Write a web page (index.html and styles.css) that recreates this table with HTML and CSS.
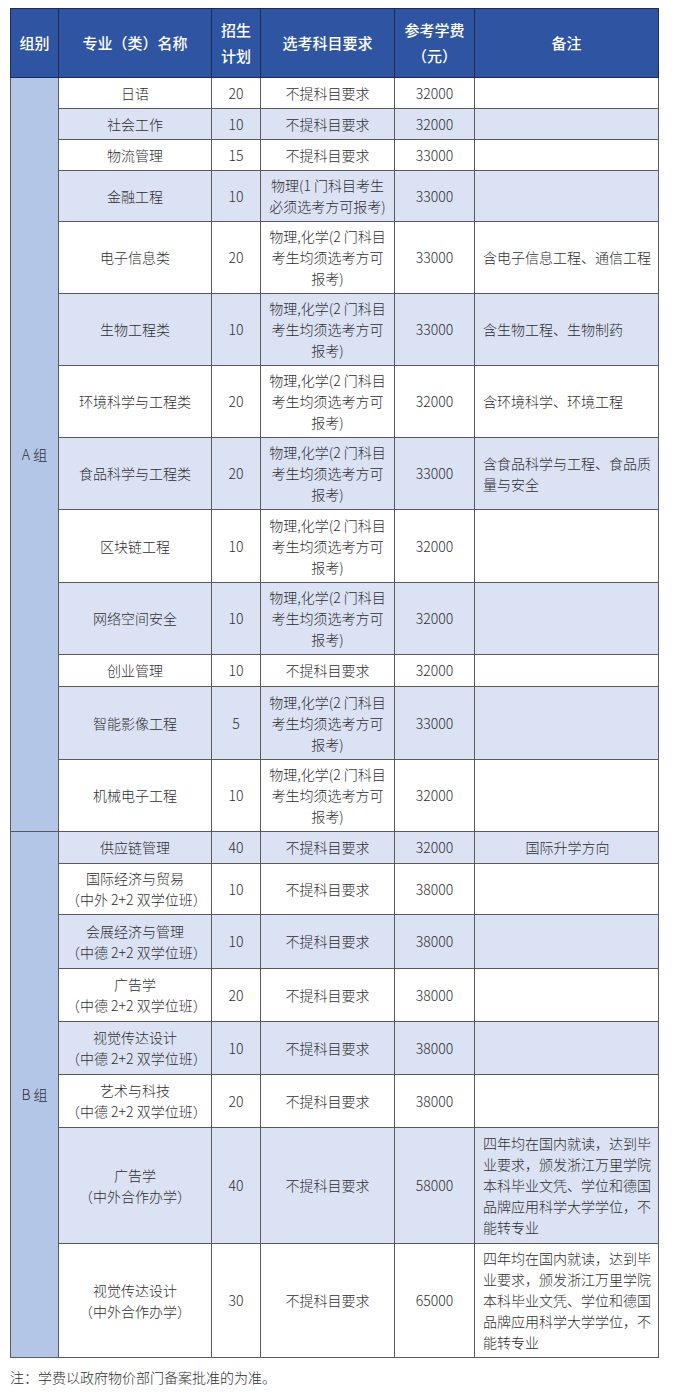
FILE: index.html
```html
<!DOCTYPE html>
<html lang="zh">
<head>
<meta charset="utf-8">
<title>招生计划</title>
<link rel="stylesheet" href="styles.css">
</head>
<body>
<div class="page">
<table class="plan-table">
  <colgroup>
    <col class="c-group"><col class="c-name"><col class="c-num"><col class="c-subj"><col class="c-fee"><col class="c-note">
  </colgroup>
  <thead>
    <tr class="r69">
      <th>组别</th>
      <th>专业（类）名称</th>
      <th>招生<br>计划</th>
      <th>选考科目要求</th>
      <th>参考学费<br>（元）</th>
      <th>备注</th>
    </tr>
  </thead>
  <tbody>
    <tr class="r31">
      <td class="grp" rowspan="13">A 组</td>
      <td>日语</td><td class="num">20</td><td class="subj">不提科目要求</td><td class="fee">32000</td><td class="note"></td>
    </tr>
    <tr class="r31 alt">
      <td>社会工作</td><td class="num">10</td><td class="subj">不提科目要求</td><td class="fee">32000</td><td class="note"></td>
    </tr>
    <tr class="r31">
      <td>物流管理</td><td class="num">15</td><td class="subj">不提科目要求</td><td class="fee">33000</td><td class="note"></td>
    </tr>
    <tr class="r51 alt">
      <td>金融工程</td><td class="num">10</td><td class="subj">物理(1 门科目考生<br>必须选考方可报考)</td><td class="fee">33000</td><td class="note"></td>
    </tr>
    <tr class="r72">
      <td>电子信息类</td><td class="num">20</td><td class="subj">物理,化学(2 门科目<br>考生均须选考方可<br>报考)</td><td class="fee">33000</td><td class="note">含电子信息工程、通信工程</td>
    </tr>
    <tr class="r72 alt">
      <td>生物工程类</td><td class="num">10</td><td class="subj">物理,化学(2 门科目<br>考生均须选考方可<br>报考)</td><td class="fee">33000</td><td class="note">含生物工程、生物制药</td>
    </tr>
    <tr class="r72">
      <td>环境科学与工程类</td><td class="num">20</td><td class="subj">物理,化学(2 门科目<br>考生均须选考方可<br>报考)</td><td class="fee">32000</td><td class="note">含环境科学、环境工程</td>
    </tr>
    <tr class="r72 alt">
      <td>食品科学与工程类</td><td class="num">20</td><td class="subj">物理,化学(2 门科目<br>考生均须选考方可<br>报考)</td><td class="fee">33000</td><td class="note">含食品科学与工程、食品质量与安全</td>
    </tr>
    <tr class="r73">
      <td>区块链工程</td><td class="num">10</td><td class="subj">物理,化学(2 门科目<br>考生均须选考方可<br>报考)</td><td class="fee">32000</td><td class="note"></td>
    </tr>
    <tr class="r72 alt">
      <td>网络空间安全</td><td class="num">10</td><td class="subj">物理,化学(2 门科目<br>考生均须选考方可<br>报考)</td><td class="fee">32000</td><td class="note"></td>
    </tr>
    <tr class="r32">
      <td>创业管理</td><td class="num">10</td><td class="subj">不提科目要求</td><td class="fee">32000</td><td class="note"></td>
    </tr>
    <tr class="r73 alt">
      <td>智能影像工程</td><td class="num">5</td><td class="subj">物理,化学(2 门科目<br>考生均须选考方可<br>报考)</td><td class="fee">33000</td><td class="note"></td>
    </tr>
    <tr class="r72">
      <td>机械电子工程</td><td class="num">10</td><td class="subj">物理,化学(2 门科目<br>考生均须选考方可<br>报考)</td><td class="fee">32000</td><td class="note"></td>
    </tr>
    <tr class="r32 alt">
      <td class="grp" rowspan="8">B 组</td>
      <td>供应链管理</td><td class="num">40</td><td class="subj">不提科目要求</td><td class="fee">32000</td><td class="note center">国际升学方向</td>
    </tr>
    <tr class="r51">
      <td>国际经济与贸易<br>（中外 2+2 双学位班）</td><td class="num">10</td><td class="subj">不提科目要求</td><td class="fee">38000</td><td class="note"></td>
    </tr>
    <tr class="r54 alt">
      <td>会展经济与管理<br>（中德 2+2 双学位班）</td><td class="num">10</td><td class="subj">不提科目要求</td><td class="fee">38000</td><td class="note"></td>
    </tr>
    <tr class="r53">
      <td>广告学<br>（中德 2+2 双学位班）</td><td class="num">20</td><td class="subj">不提科目要求</td><td class="fee">38000</td><td class="note"></td>
    </tr>
    <tr class="r53 alt">
      <td>视觉传达设计<br>（中德 2+2 双学位班）</td><td class="num">10</td><td class="subj">不提科目要求</td><td class="fee">38000</td><td class="note"></td>
    </tr>
    <tr class="r53">
      <td>艺术与科技<br>（中德 2+2 双学位班）</td><td class="num">20</td><td class="subj">不提科目要求</td><td class="fee">38000</td><td class="note"></td>
    </tr>
    <tr class="r116 alt">
      <td>广告学<br>（中外合作办学）</td><td class="num">40</td><td class="subj">不提科目要求</td><td class="fee">58000</td><td class="note">四年均在国内就读，达到毕业要求，颁发浙江万里学院本科毕业文凭、学位和德国品牌应用科学大学学位，不能转专业</td>
    </tr>
    <tr class="r114">
      <td>视觉传达设计<br>（中外合作办学）</td><td class="num">30</td><td class="subj">不提科目要求</td><td class="fee">65000</td><td class="note">四年均在国内就读，达到毕业要求，颁发浙江万里学院本科毕业文凭、学位和德国品牌应用科学大学学位，不能转专业</td>
    </tr>
  </tbody>
</table>
<p class="footnote">注：学费以政府物价部门备案批准的为准。</p>
</div>
</body>
</html>
```

FILE: styles.css
```css
html, body {
  margin: 0;
  padding: 0;
  background: #ffffff;
}

.page {
  padding: 8px 0 0 10px;
  font-family: "Noto Sans CJK SC", "Noto Sans", "Liberation Sans", sans-serif;
  font-weight: 300;
  color: #2e2e2e;
}

.plan-table {
  width: 649px;
  border-collapse: collapse;
  table-layout: fixed;
  font-size: 14px;
  line-height: 21px;
}

.c-group { width: 48px; }
.c-name { width: 153px; }
.c-num { width: 49px; }
.c-subj { width: 134px; }
.c-fee { width: 80px; }
.c-note { width: 184px; }

.plan-table th {
  background: #2f55a2;
  color: #ffffff;
  font-size: 15px;
  font-weight: 500;
  line-height: 26px;
  border: 1px solid #1e2c52;
  padding: 0 2px;
  text-align: center;
  vertical-align: middle;
}

.plan-table td {
  border: 1px solid #5a5a5a;
  padding: 0 7px;
  text-align: center;
  vertical-align: middle;
  background: #ffffff;
}

.plan-table tr.alt td {
  background: #dbe2f4;
}

.plan-table td.grp,
.plan-table tr.alt td.grp {
  background: #b4c6e8;
  padding: 0;
}

.plan-table td.subj {
  padding: 0 2px;
  white-space: nowrap;
}

.plan-table td.num,
.plan-table td.fee {
  padding: 0 2px;
}

.plan-table td.num {
  border-left-color: #8a8a8a;
}

.plan-table td.note {
  text-align: left;
  border-left-color: #8a8a8a;
  padding: 0 6px 0 8px;
}

.plan-table td.note.center {
  text-align: center;
}

.r69 { height: 69px; }
.r31 { height: 31px; }
.r32 { height: 32px; }
.r51 { height: 51px; }
.r53 { height: 53px; }
.r54 { height: 54px; }
.r72 { height: 72px; }
.r73 { height: 73px; }
.r114 { height: 114px; }
.r116 { height: 116px; }

.footnote {
  margin: 9px 0 0 0;
  font-size: 14px;
  line-height: 21px;
}
```
